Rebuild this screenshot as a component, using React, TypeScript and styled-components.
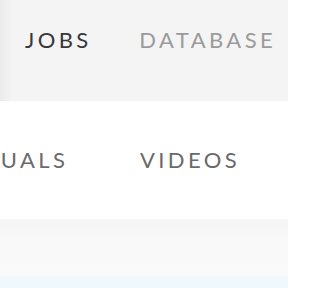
import React from "react";
import styled, { createGlobalStyle } from "styled-components";

const Global = createGlobalStyle`
  html, body { margin: 0; padding: 0; background: #ffffff; }
  body { width: 288px; height: 288px; overflow: hidden; font-family: Lato, "Open Sans", sans-serif; }
`;

const Page = styled.div`
  display: flex;
  flex-direction: column;
  width: 288px;
  height: 288px;
  overflow: hidden;
`;

const TopBar = styled.nav`
  height: 101px;
  box-sizing: border-box;
  padding: 27px 0 0 25px;
  background: linear-gradient(to right, #ebebeb 0px, #f4f4f4 12px, #f4f4f4 100%);
  display: flex;
  gap: 51px;
  white-space: nowrap;
`;

const SubBar = styled.nav`
  height: 118px;
  box-sizing: border-box;
  padding: 46px 0 0 0;
  background: #ffffff;
  display: flex;
  gap: 75px;
  white-space: nowrap;
  overflow: hidden;
`;

const Item = styled.a<{ $tone: string }>`
  font-family: Lato, "Open Sans", sans-serif;
  font-weight: 400;
  font-size: 22px;
  line-height: 1.2;
  letter-spacing: 0.155em;
  color: ${(p) => p.$tone};
  text-decoration: none;
  margin-right: -0.155em;
`;

const Lead = styled.div`
  display: flex;
  justify-content: flex-end;
  width: 65px;
  flex: none;
`;

const Filler = styled.div`
  flex: 1;
  background: linear-gradient(to bottom, #f5f5f5 0px, #f9f9f9 25px, #fafafa 56px, #f1f8fc 58px, #eff7fb 100%);
`;

export default function App() {
  return (
    <>
      <Global />
      <Page>
        <TopBar>
          <Item $tone="#383838">JOBS</Item>
          <Item $tone="#9a9a9a">DATABASE</Item>
        </TopBar>
        <SubBar>
          <Lead>
            <Item $tone="#6a6a6a">MANUALS</Item>
          </Lead>
          <Item $tone="#6a6a6a">VIDEOS</Item>
        </SubBar>
        <Filler />
      </Page>
    </>
  );
}
